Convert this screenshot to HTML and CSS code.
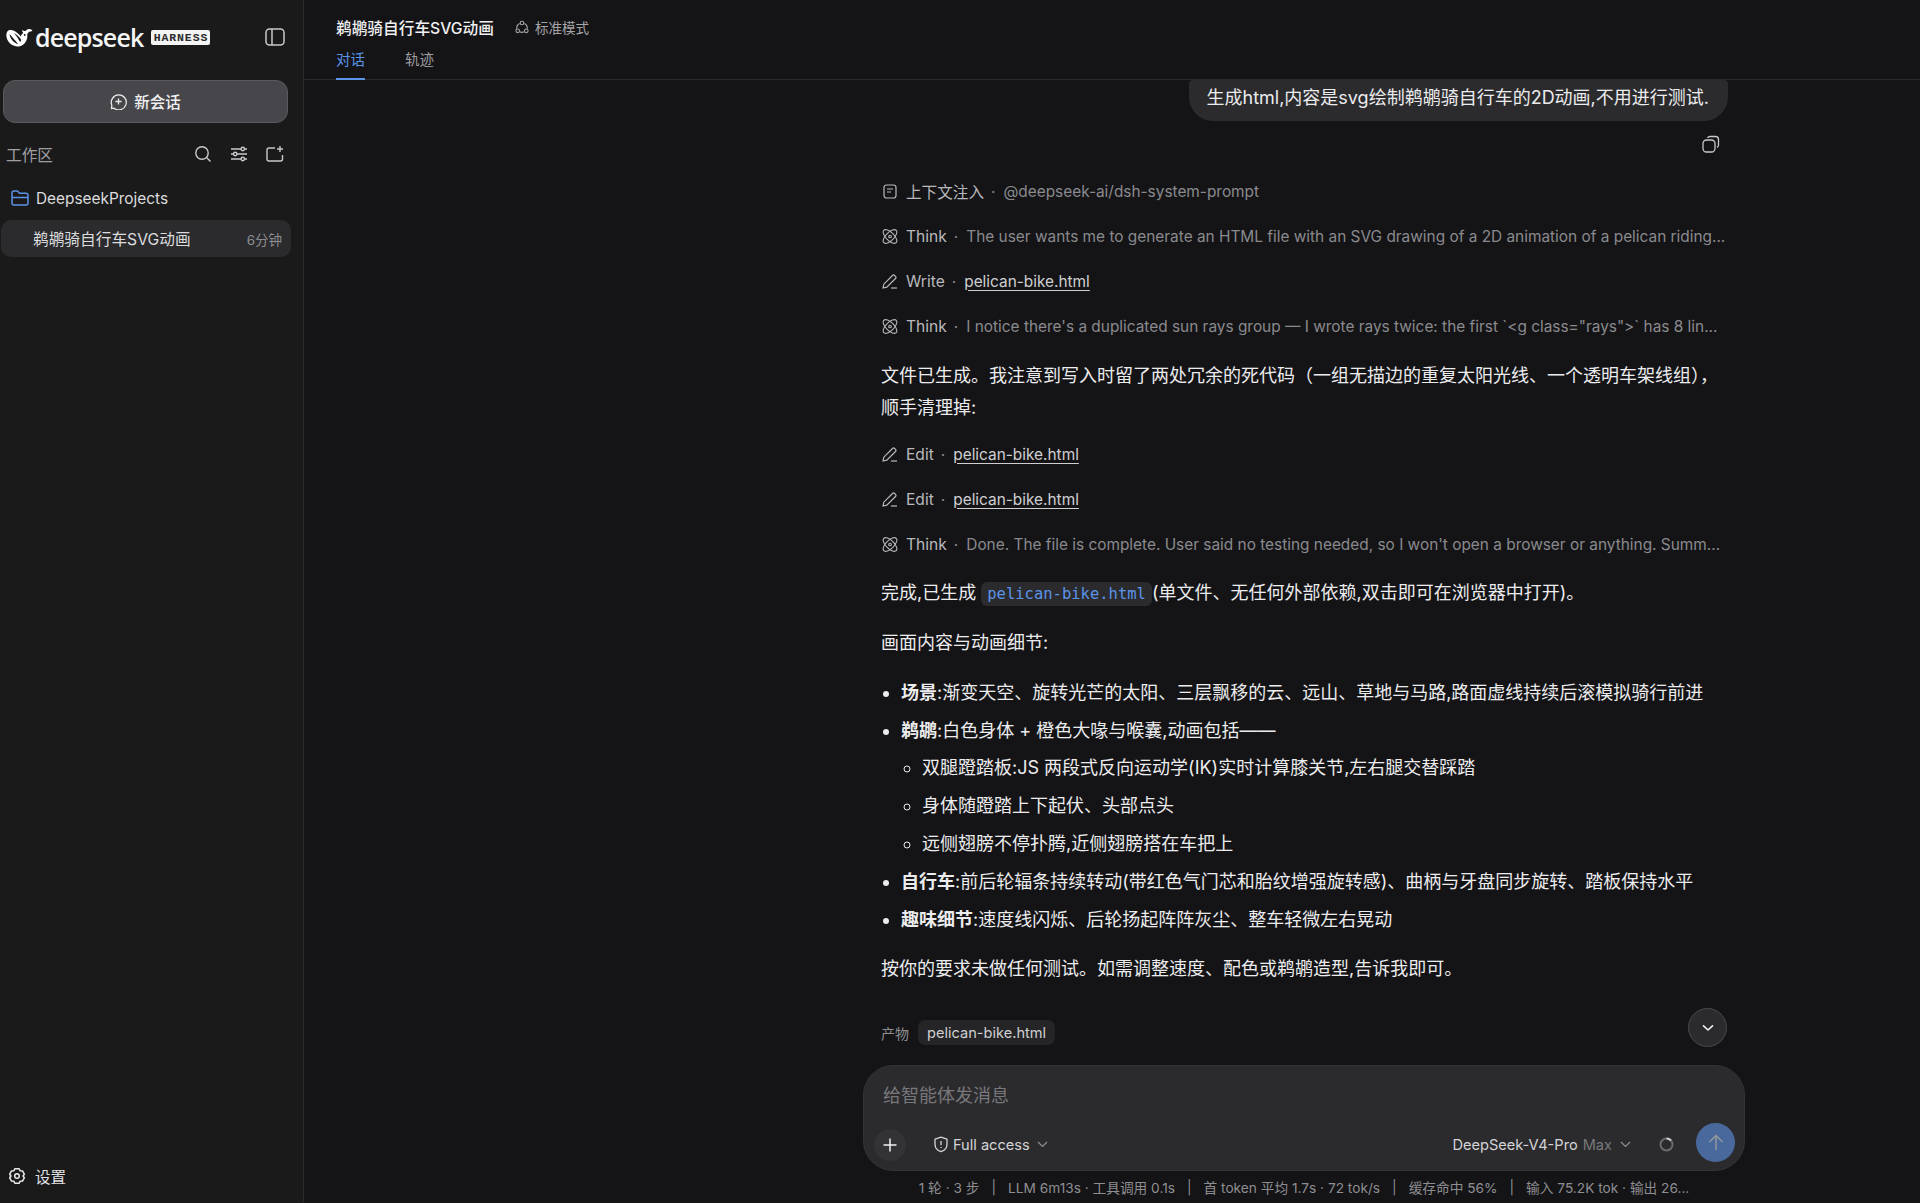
FILE: index.html
```html
<!DOCTYPE html>
<html lang="zh-CN">
<head>
  <meta charset="UTF-8">
  <title>DeepSeek Harness</title>
  <link rel="stylesheet" href="styles.css">
</head>
<body>
  <aside class="sidebar">
    <div class="brand">
      <svg class="whale" width="27" height="19" viewBox="0 0 27 19"><path d="M26.500 2.500c-1 .9-2.300 1.300-3.600 1.200-.5 1-1 1.600-1.700 2.200 1 5.600-2.600 11.800-8.400 12.500C7.500 19 2.500 15.500.8 10.300.1 8 .2 4.800 1.500 3.200 3.200 1.200 6.500 1.800 9 3.300c2.300 1.400 4.300 3.300 5.800 5.100.4-1.500 1-2.600 2.500-3.500-.7-.8-1.200-1.700-1.200-2.900 1 .9 2.300 1.300 3.500 1 .8-1.100 2-1.900 3.300-1.900 1.200 0 2.400.5 3.600 1.400z" fill="#fff"/><path d="M3.500 6c.6 4.600 3.800 8.700 8.700 10.200-1.900-2.500-3.200-4.100-5-6C5.900 8.800 4.800 7.300 3.500 6z" fill="#1a1a1b"/><path d="M8 4.800c2.800 1.700 5 4 7.200 6.900-.1.900-.5 1.700-1.100 2.300C12.300 11 10.300 7.800 8 4.800z" fill="#1a1a1b"/><circle cx="18.700" cy="7" r=".9" fill="#1a1a1b"/></svg>
      <span class="wordmark">deepseek</span>
      <span class="harness">HARNESS</span>
      <svg class="collapse" width="20" height="18" viewBox="0 0 20 18" fill="none" stroke="#c9c9cc" stroke-width="1.500"><rect x="1" y="1" width="18" height="16" rx="3.500"/><path d="M7 1v16"/></svg>
    </div>

    <button class="new-chat">
      <svg width="17" height="17" viewBox="0 0 17 17" fill="none" stroke="#e8e8ea" stroke-width="1.300"><path d="M4 15.200A7.500 7.500 0 1 0 1.800 12.200L1.500 15.500z"/><path d="M8.500 5.500v6M5.500 8.500h6"/></svg>
      新会话
    </button>

    <div class="workspace-head">
      <span class="workspace-label">工作区</span>
      <svg width="18" height="18" viewBox="0 0 18 18" fill="none" stroke="#c9c9cc" stroke-width="1.400"><circle cx="8" cy="8" r="6.200"/><path d="M12.800 12.800l3.700 3.700"/></svg>
      <svg width="18" height="18" viewBox="0 0 18 18" fill="none" stroke="#c9c9cc" stroke-width="1.400"><path d="M1 4h10M14.500 4H17M1 9h2.500M7 9h10M1 14h10M14.500 14H17"/><circle cx="12.800" cy="4" r="1.700"/><circle cx="5.200" cy="9" r="1.700"/><circle cx="12.800" cy="14" r="1.700"/></svg>
      <svg width="18" height="18" viewBox="0 0 18 18" fill="none" stroke="#c9c9cc" stroke-width="1.400"><path d="M9 3H3a2 2 0 0 0-2 2v9a2 2 0 0 0 2 2h11.500a2 2 0 0 0 2-2v-4M14 1v6M11 4h6"/></svg>
    </div>

    <div class="project">
      <svg width="18" height="16" viewBox="0 0 18 16" fill="none" stroke="#5b93e8" stroke-width="1.500"><path d="M1 13V3a2 2 0 0 1 2-2h3.500l2 2.200H15a2 2 0 0 1 2 2V13a2 2 0 0 1-2 2H3a2 2 0 0 1-2-2z"/><path d="M1 7.500h16"/></svg>
      DeepseekProjects
    </div>
    <div class="session">
      <span>鹈鹕骑自行车SVG动画</span>
      <span class="session-time">6分钟</span>
    </div>

    <div class="settings">
      <svg width="18" height="18" viewBox="0 0 18 18" fill="none" stroke="#e8e8ea" stroke-width="1.500"><path d="M6.800 1.800h4.400l1 2 2.300.1 1.800 3.300L15 9l1.300 1.800-1.800 3.300-2.300.1-1 2H6.800l-1-2-2.300-.1-1.800-3.300L3 9 1.700 7.200l1.800-3.300 2.300-.1z" stroke-linejoin="round"/><circle cx="9" cy="9" r="2.300"/></svg>
      设置
    </div>
  </aside>

  <main class="main">
    <header class="topbar">
      <div class="title-row">
        <span class="title">鹈鹕骑自行车SVG动画</span>
        <span class="mode">
          <svg width="14" height="14" viewBox="0 0 14 14" fill="none" stroke="#a5a5a9" stroke-width="1.100"><circle cx="7" cy="3" r="1.800"/><circle cx="2.700" cy="10.800" r="1.800"/><circle cx="11.300" cy="10.800" r="1.800"/><path d="M4.600 3.600A5.500 5.500 0 0 0 1.700 8.800M4.700 11.800a5.500 5.500 0 0 0 4.600 0M9.400 3.600a5.500 5.500 0 0 1 2.900 5.200"/></svg>
          标准模式
        </span>
      </div>
      <nav class="tabs">
        <span class="tab active">对话</span>
        <span class="tab">轨迹</span>
      </nav>
    </header>

    <section class="thread">
      <div class="bubble-row">
        <div class="bubble">生成html,内容是svg绘制鹈鹕骑自行车的2D动画,不用进行测试.</div>
      </div>
      <div class="copy-row">
        <svg width="18" height="18" viewBox="0 0 18 18" fill="none" stroke="#c9c9cc" stroke-width="1.300"><rect x="1" y="5" width="12" height="12" rx="3.500"/><path d="M5.500 2.800A3 3 0 0 1 8 1.500h5.500a3 3 0 0 1 3 3V10a3 3 0 0 1-1.500 2.500"/></svg>
      </div>

      <div class="step first">
        <svg class="step-icon" width="15" height="15" viewBox="0 0 15 15" fill="none" stroke="#b9b9bd" stroke-width="1.200"><rect x="1.500" y="1" width="12" height="13" rx="2.500"/><path d="M4.500 5h6M4.500 8h4"/></svg>
        <span class="step-name">上下文注入</span><span class="dot">·</span><span class="step-text">@deepseek-ai/dsh-system-prompt</span>
      </div>
      <div class="step">
        <svg class="step-icon" width="15" height="15" viewBox="0 0 15 15" fill="none" stroke="#b9b9bd" stroke-width="1.100"><ellipse cx="7.500" cy="7.500" rx="8.800" ry="4" transform="rotate(45 7.500 7.500)"/><ellipse cx="7.500" cy="7.500" rx="8.800" ry="4" transform="rotate(-45 7.500 7.500)"/><circle cx="7.500" cy="7.500" r="1.300"/></svg>
        <span class="step-name">Think</span><span class="dot">·</span><span class="step-text">The user wants me to generate an HTML file with an SVG drawing of a 2D animation of a pelican riding...</span>
      </div>
      <div class="step">
        <svg class="step-icon" width="16" height="15" viewBox="0 0 16 15" fill="none" stroke="#b9b9bd" stroke-width="1.200"><path d="M1 14l.8-3.800L10.500 1.500a1.500 1.500 0 0 1 2.100 0l.9.900a1.500 1.500 0 0 1 0 2.100L4.800 13.200z"/><path d="M9 14h6"/></svg>
        <span class="step-name">Write</span><span class="dot">·</span><a class="step-link">pelican-bike.html</a>
      </div>
      <div class="step">
        <svg class="step-icon" width="15" height="15" viewBox="0 0 15 15" fill="none" stroke="#b9b9bd" stroke-width="1.100"><ellipse cx="7.500" cy="7.500" rx="8.800" ry="4" transform="rotate(45 7.500 7.500)"/><ellipse cx="7.500" cy="7.500" rx="8.800" ry="4" transform="rotate(-45 7.500 7.500)"/><circle cx="7.500" cy="7.500" r="1.300"/></svg>
        <span class="step-name">Think</span><span class="dot">·</span><span class="step-text">I notice there's a duplicated sun rays group — I wrote rays twice: the first `&lt;g class="rays"&gt;` has 8 lin...</span>
      </div>

      <p class="para after-steps">文件已生成。我注意到写入时留了两处冗余的死代码（一组无描边的重复太阳光线、一个透明车架线组），顺手清理掉:</p>

      <div class="step">
        <svg class="step-icon" width="16" height="15" viewBox="0 0 16 15" fill="none" stroke="#b9b9bd" stroke-width="1.200"><path d="M1 14l.8-3.800L10.500 1.500a1.500 1.500 0 0 1 2.100 0l.9.900a1.500 1.500 0 0 1 0 2.100L4.800 13.200z"/><path d="M9 14h6"/></svg>
        <span class="step-name">Edit</span><span class="dot">·</span><a class="step-link">pelican-bike.html</a>
      </div>
      <div class="step">
        <svg class="step-icon" width="16" height="15" viewBox="0 0 16 15" fill="none" stroke="#b9b9bd" stroke-width="1.200"><path d="M1 14l.8-3.800L10.500 1.500a1.500 1.500 0 0 1 2.100 0l.9.900a1.500 1.500 0 0 1 0 2.100L4.800 13.200z"/><path d="M9 14h6"/></svg>
        <span class="step-name">Edit</span><span class="dot">·</span><a class="step-link">pelican-bike.html</a>
      </div>
      <div class="step">
        <svg class="step-icon" width="15" height="15" viewBox="0 0 15 15" fill="none" stroke="#b9b9bd" stroke-width="1.100"><ellipse cx="7.500" cy="7.500" rx="8.800" ry="4" transform="rotate(45 7.500 7.500)"/><ellipse cx="7.500" cy="7.500" rx="8.800" ry="4" transform="rotate(-45 7.500 7.500)"/><circle cx="7.500" cy="7.500" r="1.300"/></svg>
        <span class="step-name">Think</span><span class="dot">·</span><span class="step-text">Done. The file is complete. User said no testing needed, so I won't open a browser or anything. Summ...</span>
      </div>

      <p class="para done">完成,已生成 <code class="inline-code">pelican-bike.html</code>(单文件、无任何外部依赖,双击即可在浏览器中打开)。</p>
      <p class="para">画面内容与动画细节:</p>

      <ul class="list">
        <li><b>场景</b>:渐变天空、旋转光芒的太阳、三层飘移的云、远山、草地与马路,路面虚线持续后滚模拟骑行前进</li>
        <li><b>鹈鹕</b>:白色身体 + 橙色大喙与喉囊,动画包括——
          <ul class="sublist">
            <li>双腿蹬踏板:JS 两段式反向运动学(IK)实时计算膝关节,左右腿交替踩踏</li>
            <li>身体随蹬踏上下起伏、头部点头</li>
            <li>远侧翅膀不停扑腾,近侧翅膀搭在车把上</li>
          </ul>
        </li>
        <li><b>自行车</b>:前后轮辐条持续转动(带红色气门芯和胎纹增强旋转感)、曲柄与牙盘同步旋转、踏板保持水平</li>
        <li><b>趣味细节</b>:速度线闪烁、后轮扬起阵阵灰尘、整车轻微左右晃动</li>
      </ul>

      <p class="para">按你的要求未做任何测试。如需调整速度、配色或鹈鹕造型,告诉我即可。</p>

      <div class="artifacts">
        <span class="artifacts-label">产物</span>
        <span class="artifact">pelican-bike.html</span>
      </div>
      <button class="scroll-down">
        <svg width="12" height="8" viewBox="0 0 12 8" fill="none" stroke="#f0f0f2" stroke-width="1.600" stroke-linecap="round" stroke-linejoin="round"><path d="M1.500 1.800L6 6l4.500-4.200"/></svg>
      </button>
    </section>

    <div class="composer">
      <div class="placeholder">给智能体发消息</div>
      <div class="composer-bar">
        <span class="add">
          <svg width="14" height="14" viewBox="0 0 14 14" fill="none" stroke="#f0f0f2" stroke-width="1.500"><path d="M7 .5v13M.5 7h13"/></svg>
        </span>
        <span class="access">
          <svg width="16" height="17" viewBox="0 0 16 17" fill="none" stroke="#d4d4d7" stroke-width="1.300"><path d="M8 1.200l6 2v5c0 3.700-2.600 6.300-6 7.500-3.400-1.200-6-3.800-6-7.500v-5z" stroke-linejoin="round"/><path d="M8 5v4.200M8 11v1"/></svg>
          Full access
          <svg class="chev" width="11" height="7" viewBox="0 0 11 7" fill="none" stroke="#8e8e92" stroke-width="1.200"><path d="M1 1l4.500 4.500L10 1"/></svg>
        </span>
        <span class="model">DeepSeek-V4-Pro <span class="model-tier">Max</span>
          <svg class="chev" width="11" height="7" viewBox="0 0 11 7" fill="none" stroke="#8e8e92" stroke-width="1.200"><path d="M1 1l4.500 4.500L10 1"/></svg>
        </span>
        <svg class="usage" width="15" height="15" viewBox="0 0 15 15" fill="none" stroke-width="2"><circle cx="7.500" cy="7.500" r="6" stroke="#6b6b6f"/><path d="M7.500 1.500a6 6 0 0 1 4.500 2" stroke="#c9c9cc"/></svg>
        <span class="send">
          <svg width="16" height="17" viewBox="0 0 16 17" fill="none" stroke="#8f959e" stroke-width="1.600"><path d="M8 16V1.500M1.500 8L8 1.500 14.500 8"/></svg>
        </span>
      </div>
    </div>
    <footer class="stats">
      <span>1 轮 · 3 步</span><span class="sep">|</span>
      <span>LLM 6m13s · 工具调用 0.1s</span><span class="sep">|</span>
      <span>首 token 平均 1.7s · 72 tok/s</span><span class="sep">|</span>
      <span>缓存命中 56%</span><span class="sep">|</span>
      <span>输入 75.2K tok · 输出 26...</span>
    </footer>
  </main>
</body>
</html>
```

FILE: styles.css
```css
* {
  box-sizing: border-box;
}
html, body {
  height: 100%;
}
body {
  margin: 0;
  display: flex;
  overflow: hidden;
  background: #141416;
  color: #ececee;
  font-family: Inter, "Noto Sans CJK SC", sans-serif;
  font-size: 16px;
}

/* sidebar */
.sidebar {
  width: 304px;
  flex: none;
  display: flex;
  flex-direction: column;
  background: #1a1a1b;
  border-right: 1px solid #2a2a2c;
  padding: 0 13px 0 1px;
}
.brand {
  height: 74px;
  display: flex;
  align-items: center;
  padding-left: 5px;
}
.wordmark {
  margin-left: 2px;
  font-family: "Open Sans", sans-serif;
  font-size: 25px;
  font-weight: 600;
  letter-spacing: -.85px;
  color: #f5f5f5;
}
.harness {
  margin-left: 8px;
  width: 59px;
  height: 15px;
  display: flex;
  align-items: center;
  justify-content: center;
  background: #f4f4f4;
  color: #2a2a2c;
  font-family: "Liberation Mono", monospace;
  font-size: 11.5px;
  font-weight: 700;
  letter-spacing: .9px;
  border-radius: 2px;
}
.collapse {
  margin-left: auto;
  margin-right: 5px;
}
.new-chat {
  margin: 6px 0 0 2px;
  width: 285px;
  height: 43px;
  display: flex;
  align-items: center;
  justify-content: center;
  gap: 7px;
  padding-bottom: 2px;
  background: #47474b;
  border: 1px solid #5a5a5e;
  border-radius: 12px;
  color: #f0f0f2;
  font: 500 15.5px Inter, "Noto Sans CJK SC", sans-serif;
}
.workspace-head {
  margin-top: 20px;
  height: 22px;
  display: flex;
  align-items: center;
  gap: 18px;
  padding: 0 6px 0 5px;
}
.workspace-label {
  margin-right: auto;
  font-size: 15.7px;
  color: #a0a0a4;
}
.project {
  margin-top: 19px;
  height: 28px;
  display: flex;
  align-items: center;
  gap: 7px;
  padding-left: 10px;
  font-size: 15.4px;
  color: #dcdcde;
}
.session {
  margin-top: 8px;
  width: 290px;
  height: 37px;
  display: flex;
  align-items: center;
  justify-content: space-between;
  padding: 0 9px 0 32px;
  background: #2b2b2d;
  border-radius: 10px;
  font-size: 15.7px;
  color: #dcdcde;
}
.session-time {
  font-size: 13.5px;
  color: #8e8e92;
}
.settings {
  margin-top: auto;
  height: 51px;
  display: flex;
  align-items: center;
  gap: 9px;
  padding-left: 7px;
  padding-bottom: 4px;
  font-size: 15.5px;
  color: #e0e0e2;
}

/* main column */
.main {
  flex: 1;
  min-width: 0;
  display: flex;
  flex-direction: column;
}
.topbar {
  height: 80px;
  flex: none;
  padding: 16px 0 0 32px;
  border-bottom: 1px solid #2a2a2c;
}
.title-row {
  display: flex;
  align-items: center;
  gap: 21px;
  height: 22px;
}
.title {
  font-size: 15.7px;
  font-weight: 500;
  color: #f0f0f2;
}
.mode {
  display: flex;
  align-items: center;
  gap: 6px;
  font-size: 13.5px;
  color: #a5a5a9;
}
.tabs {
  display: flex;
  gap: 40px;
  margin-top: 9px;
}
.tab {
  height: 33px;
  padding-top: 1px;
  font-size: 14.5px;
  color: #9c9ca0;
}
.tab.active {
  color: #5b93e8;
  border-bottom: 2px solid #5b93e8;
}

.thread {
  position: relative;
  flex: 1;
  min-height: 0;
  padding: 0 0 0 577px;
  width: 1424px;
  overflow: hidden;
}
.bubble-row {
  display: flex;
  justify-content: flex-end;
}
.bubble {
  height: 41px;
  padding: 0 19px 10px 18px;
  display: flex;
  align-items: center;
  background: #2b2b2d;
  border-radius: 4px 4px 24px 24px;
  font-size: 18px;
  color: #ececee;
}
.copy-row {
  display: flex;
  justify-content: flex-end;
  padding-right: 8px;
  margin-top: 14px;
}
.step {
  height: 24px;
  margin-top: 21px;
  display: flex;
  align-items: center;
  font-size: 15.4px;
  white-space: nowrap;
}
.step.first {
  margin-top: 26px;
}
.step-icon {
  width: 16px;
  margin: 0 8px 0 1px;
  flex: none;
}
.step-name {
  font-size: 15.6px;
  color: #b9b9bd;
}
.dot {
  margin: 0 8px 0 7px;
  color: #8a8a8e;
}
.step-text {
  color: #8a8a8e;
}
.step-link {
  color: #cfcfd2;
  text-decoration: underline;
  text-underline-offset: 3px;
}
.para {
  margin: 17px 0 0;
  font-size: 18px;
  line-height: 32px;
  color: #ececee;
}
.para.after-steps {
  margin-top: 22px;
}
.para.done {
  margin-top: 21px;
}
.para.after-steps + .step {
  margin-top: 18px;
}
.inline-code {
  padding: 3px 6px;
  background: #2b2b2d;
  border-radius: 6px;
  font-family: "DejaVu Sans Mono", monospace;
  font-size: 15.5px;
  color: #5b93e8;
}
.list {
  margin: 18px 0 0;
  padding-left: 20px;
  font-size: 18px;
  line-height: 32px;
}
.list > li {
  margin-bottom: 6px;
}
.sublist {
  list-style: circle;
  margin: 5px 0 0;
  padding-left: 21px;
}
.sublist li {
  margin-bottom: 6px;
}
.artifacts {
  margin-top: 35px;
  display: flex;
  align-items: center;
  gap: 9px;
}
.artifacts-label {
  font-size: 14px;
  color: #8e8e92;
}
.artifact {
  height: 25px;
  padding: 0 9px;
  display: flex;
  align-items: center;
  background: #252527;
  border-radius: 7px;
  font-size: 14.6px;
  color: #cfcfd2;
}
.scroll-down {
  position: absolute;
  left: 1384px;
  top: 928px;
  width: 39px;
  height: 39px;
  display: flex;
  align-items: center;
  justify-content: center;
  background: #2b2b2d;
  border: 1px solid #4a4a4d;
  border-radius: 50%;
}

/* composer */
.composer {
  flex: none;
  margin-left: 559px;
  width: 882px;
  height: 106px;
  padding: 15px 0 0;
  background: #2b2b2d;
  border: 1px solid #333336;
  border-radius: 30px;
}
.placeholder {
  padding-left: 19px;
  font-size: 18px;
  color: #77777b;
}
.composer-bar {
  margin-top: 16px;
  padding: 0 9px 0 10px;
  display: flex;
  align-items: center;
  font-size: 14.6px;
  color: #d4d4d7;
}
.add {
  width: 32px;
  height: 32px;
  display: flex;
  align-items: center;
  justify-content: center;
  background: #333336;
  border-radius: 50%;
}
.access {
  margin-left: 27px;
  display: flex;
  align-items: center;
  gap: 4px;
}
.chev {
  margin-left: 3px;
}
.model {
  margin-left: auto;
  display: flex;
  align-items: center;
  gap: 5px;
}
.model-tier {
  color: #77777b;
}
.usage {
  margin-left: 28px;
}
.send {
  margin-left: 22px;
  margin-bottom: 4px;
  width: 39px;
  height: 39px;
  display: flex;
  align-items: center;
  justify-content: center;
  background: #49689b;
  border-radius: 50%;
}
.stats {
  flex: none;
  height: 32px;
  margin-left: 559px;
  width: 882px;
  display: flex;
  align-items: center;
  justify-content: center;
  white-space: nowrap;
  font-size: 13.7px;
  color: #8e8e92;
}
.sep {
  margin: 0 12px;
}
```
